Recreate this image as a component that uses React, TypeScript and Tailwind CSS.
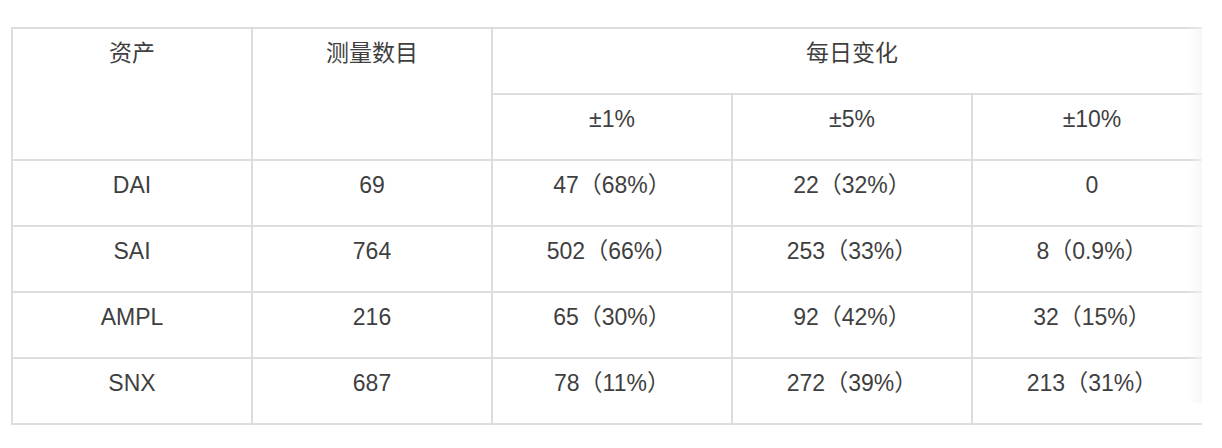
const rows = [
  ["DAI", "69", "47（68%）", "22（32%）", "0"],
  ["SAI", "764", "502（66%）", "253（33%）", "8（0.9%）"],
  ["AMPL", "216", "65（30%）", "92（42%）", "32（15%）"],
  ["SNX", "687", "78（11%）", "272（39%）", "213（31%）"],
];

const cell = "bg-white text-center pt-[8px] leading-[32px]";

const App = () => {
  return (
    <div
      className="w-[1222px] h-[448px] bg-white pl-[11px] pt-[27px] text-[#3f3f3f] text-[23px]"
      style={{ fontFamily: '"Liberation Sans", "Noto Sans CJK SC", sans-serif' }}
    >
      <div className="relative w-[1191px] overflow-hidden">
        <div className="grid w-[1202px] grid-cols-[repeat(5,238px)] auto-rows-[64px] gap-[2px] p-[2px] bg-[#dddddd]">
          <div className={`${cell} row-span-2`}>资产</div>
          <div className={`${cell} row-span-2`}>测量数目</div>
          <div className={`${cell} col-span-3`}>每日变化</div>
          <div className={cell}>±1%</div>
          <div className={cell}>±5%</div>
          <div className={cell}>±10%</div>
          {rows.map((r) =>
            r.map((v, i) => (
              <div key={r[0] + i} className={cell}>
                {v}
              </div>
            ))
          )}
        </div>
        {/* scroll shadow on the right edge */}
        <div className="absolute right-0 top-0 h-[376px] w-[14px] bg-gradient-to-r from-transparent to-[#f4f4f4] opacity-70" />
      </div>
    </div>
  );
};

export default App;
